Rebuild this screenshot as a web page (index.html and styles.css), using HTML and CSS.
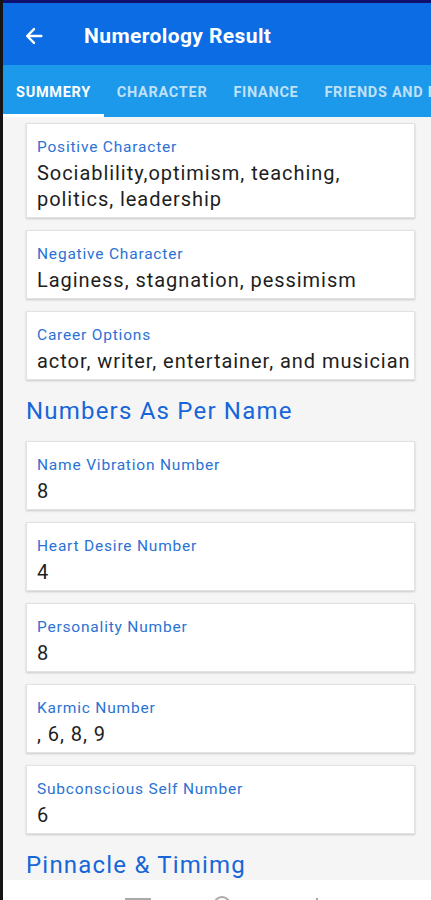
FILE: index.html
```html
<!DOCTYPE html>
<html>
<head>
<meta charset="utf-8">
<link rel="stylesheet" href="styles.css">
</head>
<body>
<div class="screen">
  <div class="statusline"></div>
  <header class="appbar">
    <svg class="back" width="22" height="22" viewBox="0 0 24 24"><path d="M20 12H5M12 4.5 4.5 12 12 19.5" fill="none" stroke="#fff" stroke-width="2.6" stroke-linecap="round" stroke-linejoin="round"/></svg>
    <h1 class="title">Numerology Result</h1>
  </header>
  <nav class="tabs">
    <div class="tab active">SUMMERY</div>
    <div class="tab">CHARACTER</div>
    <div class="tab">FINANCE</div>
    <div class="tab">FRIENDS AND FAMILY</div>
  </nav>
  <main class="content">
    <div class="card"><div class="label">Positive Character</div><div class="value">Sociablility,optimism, teaching, politics, leadership</div></div>
    <div class="card"><div class="label">Negative Character</div><div class="value">Laginess, stagnation, pessimism</div></div>
    <div class="card"><div class="label">Career Options</div><div class="value nowrap">actor, writer, entertainer, and musician</div></div>
    <h2 class="heading">Numbers As Per Name</h2>
    <div class="card"><div class="label">Name Vibration Number</div><div class="value">8</div></div>
    <div class="card"><div class="label">Heart Desire Number</div><div class="value">4</div></div>
    <div class="card"><div class="label">Personality Number</div><div class="value">8</div></div>
    <div class="card"><div class="label">Karmic Number</div><div class="value">, 6, 8, 9</div></div>
    <div class="card"><div class="label">Subconscious Self Number</div><div class="value">6</div></div>
    <h2 class="heading">Pinnacle &amp; Timimg</h2>
  </main>
  <footer class="bottombar">
    <span class="nav-sq"></span>
    <span class="nav-circle"></span>
    <span class="nav-tick"></span>
  </footer>
</div>
</body>
</html>
```
FILE: styles.css
```css
html, body {
  margin: 0;
  padding: 0;
  background: #f5f5f5;
}
.screen {
  width: 431px;
  height: 900px;
  overflow: hidden;
  position: relative;
  border-left: 3px solid #141414;
  box-sizing: border-box;
  background: #f5f5f5;
  font-family: Roboto, "Noto Sans", sans-serif;
}
.statusline {
  height: 3px;
  background: #10106e;
}
.appbar {
  height: 62px;
  box-sizing: border-box;
  padding-top: 4px;
  background: #0b6ce4;
  display: flex;
  align-items: center;
  padding-left: 20px;
}
.back {
  display: block;
}
.title {
  margin: 0 0 0 39px;
  color: #fff;
  font-size: 21px;
  font-weight: 700;
  letter-spacing: 0.4px;
}
.tabs {
  height: 52px;
  background: #1c99ea;
  display: flex;
  white-space: nowrap;
}
.tab {
  height: 52px;
  box-sizing: border-box;
  padding: 2px 13px 0 13px;
  display: flex;
  align-items: center;
  font-size: 14.5px;
  font-weight: 700;
  letter-spacing: 0.7px;
  color: rgba(255,255,255,0.72);
  flex: none;
}
.tab.active {
  color: #fff;
  border-bottom: 3px solid #fff;
  padding-top: 5px;
}
.content {
  padding: 6px 16px 0 23px;
}
.card {
  background: #fff;
  border: 1px solid #e2e2e2;
  box-shadow: 0 1px 2px rgba(0,0,0,0.18);
  padding: 13px 4px 5px 10px;
  margin-bottom: 12px;
}
.label {
  color: #2b72d4;
  font-size: 15.5px;
  line-height: 20px;
  letter-spacing: 0.8px;
}
.value {
  color: #1e1e1e;
  font-size: 20px;
  line-height: 26px;
  letter-spacing: 0.95px;
  margin-top: 3px;
}
.value.nowrap {
  white-space: nowrap;
}
.heading {
  margin: 15px 0 14px 0;
  color: #1766d9;
  font-size: 24px;
  font-weight: 400;
  line-height: 32px;
  letter-spacing: 1.2px;
}
.bottombar {
  position: absolute;
  left: 0;
  right: 0;
  bottom: 0;
  height: 20px;
  background: #fff;
}
.nav-sq {
  position: absolute;
  left: 122px;
  top: 18px;
  width: 22px;
  height: 8px;
  border: 2px solid #aaa;
}
.nav-circle {
  position: absolute;
  left: 210px;
  top: 16px;
  width: 14px;
  height: 14px;
  border: 2px solid #aaa;
  border-radius: 50%;
}
.nav-tick {
  position: absolute;
  left: 313px;
  top: 18px;
  width: 2px;
  height: 6px;
  background: #aaa;
}
```
